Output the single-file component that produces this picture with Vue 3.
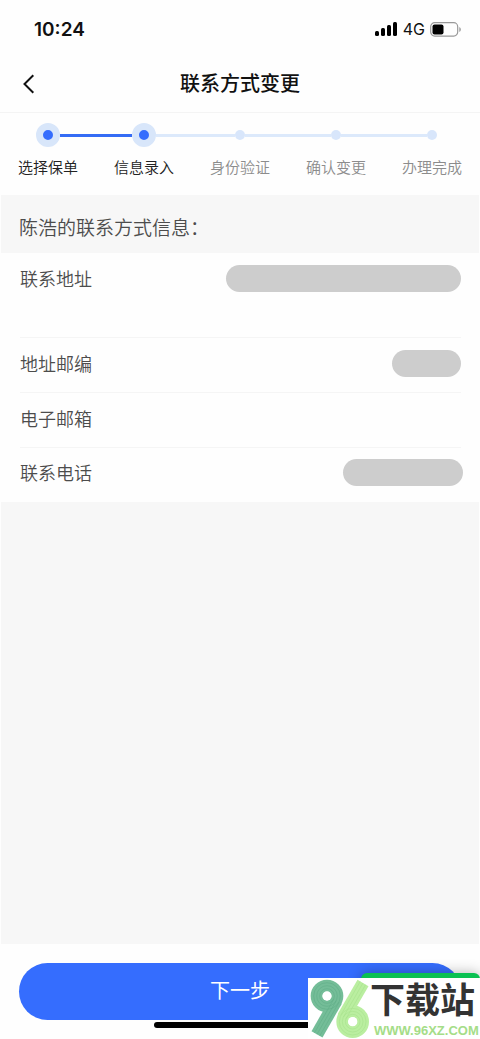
<script setup>
const steps = [
  { label: '选择保单', done: true },
  { label: '信息录入', done: true },
  { label: '身份验证', done: false },
  { label: '确认变更', done: false },
  { label: '办理完成', done: false }
]
const rows = [
  { label: '联系地址', mask: 'address', tall: true },
  { label: '地址邮编', mask: 'postcode' },
  { label: '电子邮箱', mask: '' },
  { label: '联系电话', mask: 'phone' }
]
</script>

<template>
  <div class="page">
    <div class="status">
      <span class="time">10:24</span>
      <div class="signals">
        <svg width="23" height="15" viewBox="0 0 23 15" aria-hidden="true">
          <rect x="0" y="9" width="4" height="5" rx="1.5" />
          <rect x="6" y="6" width="4" height="8" rx="1.5" />
          <rect x="12" y="3" width="4" height="11" rx="1.5" />
          <rect x="18" y="0" width="4" height="14" rx="1.5" />
        </svg>
        <span class="network">4G</span>
        <svg width="32" height="15" viewBox="0 0 32 15" aria-hidden="true">
          <rect x="0.7" y="0.7" width="27" height="13.4" rx="4" fill="none" stroke="#999" stroke-width="1.2" />
          <rect x="2.5" y="2.5" width="11" height="10" rx="2" />
          <path d="M29.3 5c2 .8 2 4.200 0 5z" fill="#999" />
        </svg>
      </div>
    </div>

    <header class="nav">
      <button class="back" type="button" aria-label="返回">
        <svg width="12" height="20" viewBox="0 0 12 20" aria-hidden="true">
          <path d="M10.300 1.200 1.500 10l8.800 8.800" fill="none" stroke="#111" stroke-width="2" />
        </svg>
      </button>
      <h1>联系方式变更</h1>
    </header>

    <ol class="steps">
      <li v-for="step in steps" :key="step.label" :class="{ done: step.done }">
        <span class="marker"><span class="dot"></span></span>
        <span>{{ step.label }}</span>
      </li>
    </ol>

    <main class="content">
      <h2>陈浩的联系方式信息：</h2>
      <dl class="info">
        <div v-for="row in rows" :key="row.label" class="row" :class="{ tall: row.tall }">
          <dt>{{ row.label }}</dt>
          <dd><span v-if="row.mask" class="mask" :class="row.mask"></span></dd>
        </div>
      </dl>
    </main>

    <footer class="footer">
      <button class="next" type="button">下一步</button>
      <div class="home"></div>
    </footer>

    <div class="tab"></div>
    <div class="watermark">
      <svg class="logo" width="62" height="61" viewBox="0 0 186 183" aria-hidden="true">
        <g fill="none" stroke="#74bd98">
          <circle cx="57" cy="54" r="31" stroke-width="36" />
          <path d="M85 68 27 169" stroke-width="38" />
        </g>
        <g fill="none" stroke="#4fa17a" stroke-width="1.500" opacity="0.6">
          <circle cx="57" cy="54" r="22" />
          <circle cx="57" cy="54" r="31" />
          <circle cx="57" cy="54" r="40" />
          <path d="M77 64 19 165M85 68 27 169M93 73 35 174" />
        </g>
        <g fill="none" stroke="#baeea0">
          <circle cx="134" cy="131" r="31" stroke-width="36" />
          <path d="M106 117 165 15" stroke-width="38" />
        </g>
        <g fill="none" stroke="#96d87a" stroke-width="1.500" opacity="0.6">
          <circle cx="134" cy="131" r="22" />
          <circle cx="134" cy="131" r="31" />
          <circle cx="134" cy="131" r="40" />
          <path d="M98 112 157 10M106 117 165 15M114 122 173 20" />
        </g>
        <circle cx="57" cy="54" r="14" fill="#fff" />
        <circle cx="134" cy="131" r="14" fill="#fff" />
      </svg>
      <div class="brand">
        <strong>下载站</strong>
        <span class="site">WWW.96XZ.COM</span>
      </div>
    </div>
  </div>
</template>

<style>
body {
  margin: 0;
  background: #fff;
}
</style>

<style scoped>
.page {
  position: relative;
  display: flex;
  flex-direction: column;
  min-height: 100vh;
  overflow: hidden;
  background: #fefefe;
  color: #4c4c4c;
  font-family: Inter, "Noto Sans CJK SC", sans-serif;
}
.status {
  display: flex;
  align-items: center;
  justify-content: space-between;
  height: 56px;
  padding: 2px 18px 0 34px;
  box-sizing: border-box;
  color: #111;
}
.time {
  font-size: 19px;
  font-weight: 600;
}
.signals {
  display: flex;
  align-items: center;
  gap: 5px;
}
.network {
  font-size: 16px;
}
.nav {
  display: grid;
  grid-template-columns: 60px 1fr 60px;
  align-items: center;
  height: 56px;
  border-bottom: 1px solid #f4f4f4;
}
.back {
  display: flex;
  padding: 0 0 0 23px;
  border: 0;
  background: none;
}
h1 {
  margin: 0;
  color: #111;
  font-size: 20px;
  font-weight: 500;
  line-height: 28px;
  text-align: center;
}
.steps {
  display: grid;
  grid-template-columns: repeat(5, 1fr);
  height: 82px;
  margin: 0;
  padding: 10px 0 0;
  box-sizing: border-box;
  list-style: none;
}
.steps li {
  display: flex;
  flex-direction: column;
  align-items: center;
  gap: 9px;
  color: #8c8c8c;
  font-size: 15px;
  font-weight: 350;
  line-height: 24px;
}
.steps li.done {
  color: #222;
}
.marker {
  display: flex;
  align-items: center;
  width: 100%;
}
.marker::before,
.marker::after {
  content: "";
  flex: 1;
  height: 3px;
  background: #dce9fb;
}
.steps li:first-child .marker::before,
.steps li:last-child .marker::after {
  background: none;
}
.steps li:first-child .marker::after,
.steps li:nth-child(2) .marker::before {
  background: #356cf5;
}
.dot {
  width: 10px;
  height: 10px;
  margin: 7px 0;
  border-radius: 50%;
  background: #d8e6fb;
}
.done .dot {
  margin: 0;
  border: 7px solid #d8e6fa;
  background: #356dfd;
}
.content {
  flex: 1;
  margin: 0 1px;
  background: #f7f7f7;
}
h2 {
  margin: 0;
  padding: 20px 18px 10px;
  font-size: 19px;
  font-weight: 350;
  line-height: 28px;
}
.info {
  margin: 0;
  padding: 0 18px 0 19px;
  background: #fefefe;
}
.row {
  display: flex;
  align-items: center;
  justify-content: space-between;
  height: 54px;
  border-bottom: 1px solid #f5f5f5;
  font-size: 18px;
  font-weight: 350;
}
.row:last-child {
  height: 52px;
  padding-bottom: 2px;
  border-bottom: 0;
}
.tall {
  align-items: flex-start;
  height: 72px;
  padding-top: 12px;
}
.row dt {
  line-height: 30px;
}
.row dd {
  margin: 0;
  padding-bottom: 3px;
}
.mask {
  display: block;
  height: 27px;
  border-radius: 14px;
  background: #cdcdcd;
}
.address {
  width: 235px;
}
.postcode {
  width: 69px;
}
.phone {
  width: 120px;
  margin-right: -2px;
}
.footer {
  padding: 19px 19px 11px;
}
.next {
  display: block;
  width: 100%;
  height: 57px;
  padding: 0 0 4px;
  border: 0;
  border-radius: 29px;
  background: #356dfe;
  color: #fff;
  font-family: inherit;
  font-size: 20px;
}
.home {
  width: 172px;
  height: 6px;
  margin: 2px auto 0;
  border-radius: 3px;
  background: #000;
}
.tab {
  position: absolute;
  right: 0;
  bottom: 0;
  width: 119px;
  height: 66px;
  border-radius: 6px 6px 0 0;
  background: #0ac152;
  box-shadow: 0 0 14px rgba(0, 0, 0, 0.3);
}
.watermark {
  position: absolute;
  right: 0;
  bottom: 0;
  display: flex;
  width: 172px;
  height: 61px;
  background: #fff;
}
.logo {
  flex: none;
}
.brand {
  display: flex;
  flex-direction: column;
  width: 110px;
}
.brand strong {
  color: #333;
  font-size: 35px;
  font-weight: 700;
  line-height: 44px;
  white-space: nowrap;
}
.site {
  margin-left: 4px;
  color: #a5dd88;
  font-family: "Liberation Sans", sans-serif;
  font-size: 13px;
  font-weight: 700;
  line-height: 18px;
}
</style>
